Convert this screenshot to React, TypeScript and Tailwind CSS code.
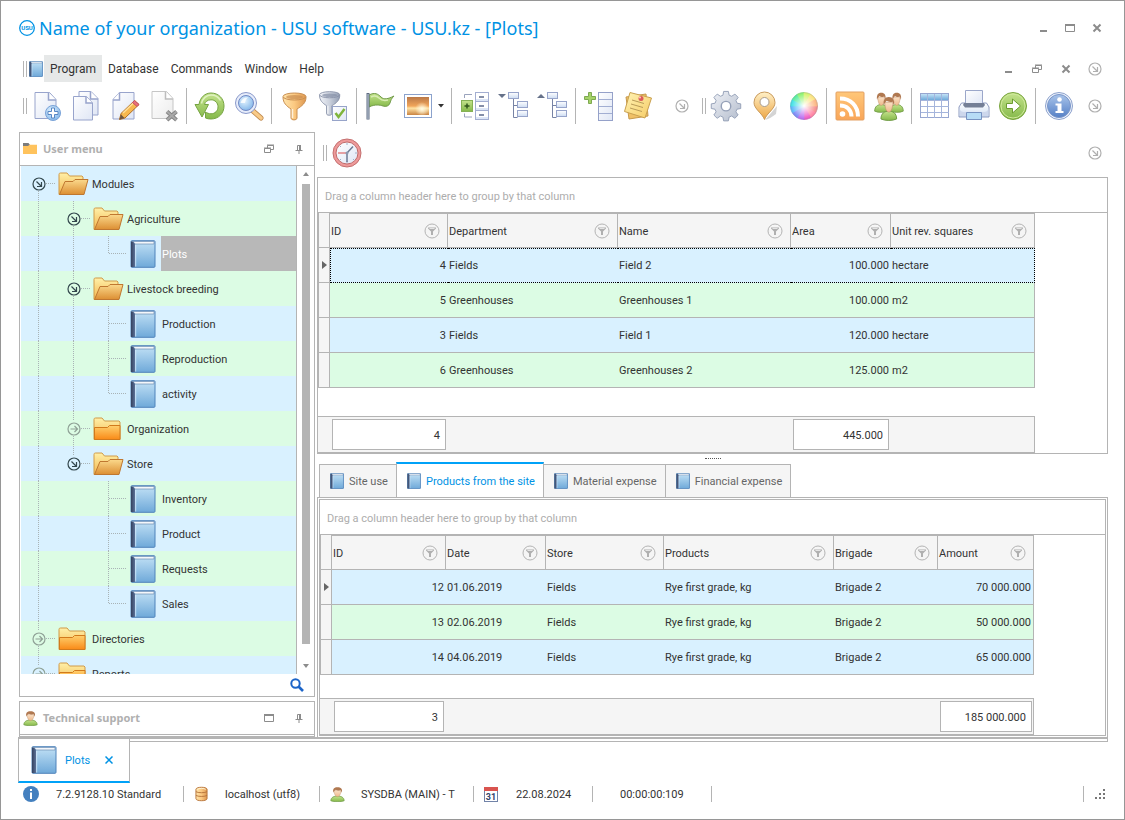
import type { ReactNode } from "react";

/* Shared gradients used by the icons below */
const Gradients = () => (
  <svg className="absolute h-0 w-0" aria-hidden="true">
    <defs>
      <linearGradient id="page" x1="0" y1="0" x2="1" y2="1">
        <stop offset="0" stopColor="#ffffff" />
        <stop offset="1" stopColor="#dfe6f5" />
      </linearGradient>
      <linearGradient id="greyPage" x1="0" y1="0" x2="1" y2="1">
        <stop offset="0" stopColor="#ffffff" />
        <stop offset="1" stopColor="#ececec" />
      </linearGradient>
      <linearGradient id="book" x1="0" y1="0" x2="0" y2="1">
        <stop offset="0" stopColor="#c3e2f6" />
        <stop offset="1" stopColor="#6fa9d9" />
      </linearGradient>
      <linearGradient id="spine" x1="0" y1="0" x2="1" y2="0">
        <stop offset="0" stopColor="#33415f" />
        <stop offset="1" stopColor="#5c7197" />
      </linearGradient>
      <linearGradient id="folderBack" x1="0" y1="0" x2="0" y2="1">
        <stop offset="0" stopColor="#fff0a8" />
        <stop offset="1" stopColor="#f3b64e" />
      </linearGradient>
      <linearGradient id="folderOpen" x1="0" y1="0" x2="0" y2="1">
        <stop offset="0" stopColor="#fbd98c" />
        <stop offset="1" stopColor="#dc8f33" />
      </linearGradient>
      <linearGradient id="folderShut" x1="0" y1="0" x2="0" y2="1">
        <stop offset="0" stopColor="#ffd06e" />
        <stop offset="1" stopColor="#f98a17" />
      </linearGradient>
      <linearGradient id="green" x1="0" y1="0" x2="0" y2="1">
        <stop offset="0" stopColor="#c4e38c" />
        <stop offset="1" stopColor="#85b94a" />
      </linearGradient>
      <linearGradient id="gold" x1="0" y1="0" x2="1" y2="0">
        <stop offset="0" stopColor="#ffe4ab" />
        <stop offset="0.5" stopColor="#fbc880" />
        <stop offset="1" stopColor="#dd9750" />
      </linearGradient>
      <linearGradient id="steel" x1="0" y1="0" x2="1" y2="0">
        <stop offset="0" stopColor="#f1f3f8" />
        <stop offset="0.5" stopColor="#cbd1dd" />
        <stop offset="1" stopColor="#929db2" />
      </linearGradient>
      <linearGradient id="gear" x1="0" y1="0" x2="1" y2="1">
        <stop offset="0" stopColor="#f0f2f7" />
        <stop offset="1" stopColor="#b3bccc" />
      </linearGradient>
      <linearGradient id="sunset" x1="0" y1="0" x2="0" y2="1">
        <stop offset="0" stopColor="#b97848" />
        <stop offset="0.5" stopColor="#f1a55a" />
        <stop offset="0.62" stopColor="#ffe2a4" />
        <stop offset="1" stopColor="#c98443" />
      </linearGradient>
      <linearGradient id="cell" x1="0" y1="0" x2="0" y2="1">
        <stop offset="0" stopColor="#ffffff" />
        <stop offset="1" stopColor="#cddcf2" />
      </linearGradient>
      <linearGradient id="pin" x1="0" y1="0" x2="0" y2="1">
        <stop offset="0" stopColor="#fff1c8" />
        <stop offset="1" stopColor="#eda543" />
      </linearGradient>
      <linearGradient id="rss" x1="0" y1="0" x2="0" y2="1">
        <stop offset="0" stopColor="#ffc779" />
        <stop offset="1" stopColor="#f9a558" />
      </linearGradient>
      <linearGradient id="note" x1="0" y1="0" x2="1" y2="1">
        <stop offset="0" stopColor="#fff3b4" />
        <stop offset="1" stopColor="#f6cc66" />
      </linearGradient>
      <linearGradient id="info" x1="0" y1="0" x2="0" y2="1">
        <stop offset="0" stopColor="#a9c4ea" />
        <stop offset="1" stopColor="#5580c6" />
      </linearGradient>
      <linearGradient id="face" x1="0" y1="0" x2="0" y2="1">
        <stop offset="0" stopColor="#fbe0c4" />
        <stop offset="1" stopColor="#eeb98c" />
      </linearGradient>
      <radialGradient id="lens" cx="0.4" cy="0.35" r="0.7">
        <stop offset="0" stopColor="#e4f4ff" />
        <stop offset="1" stopColor="#7fb4e9" />
      </radialGradient>
      <radialGradient id="flare">
        <stop offset="0" stopColor="#fffbe4" />
        <stop offset="1" stopColor="#fffbe4" stopOpacity="0" />
      </radialGradient>
      <radialGradient id="wheelGlow">
        <stop offset="0" stopColor="#ffffff" />
        <stop offset="1" stopColor="#ffffff" stopOpacity="0" />
      </radialGradient>
    </defs>
  </svg>
);

const Icon = ({ children }: { children: ReactNode }) => (
  <svg viewBox="0 0 32 32" className="h-8 w-8 shrink-0" fill="none" aria-hidden="true">
    {children}
  </svg>
);

const NewIcon = () => (
  <Icon>
    <path d="M4 2.500h14.500l6.500 7V28.500H4z" fill="url(#page)" stroke="#98a4cc" />
    <path d="M17.500 2.500v7.500H25" fill="#fff" stroke="#98a4cc" strokeWidth="1.500" />
    <circle cx="22" cy="23" r="7.500" fill="url(#lens)" stroke="#7aa3d8" />
    <path d="M20.500 18h3v3.500H27v3h-3.500V28h-3v-3.500H17v-3h3.500z" fill="#fff" stroke="#5786c4" />
  </Icon>
);

const CopyIcon = () => (
  <Icon>
    <path d="M9 1.500h12l7 7V25H9z" fill="url(#page)" stroke="#98a4cc" />
    <path d="M20.500 1.500V9H28" fill="#fff" stroke="#98a4cc" strokeWidth="1.500" />
    <path d="M3.500 6.500h13l6 6.500v17h-19z" fill="url(#page)" stroke="#98a4cc" />
    <path d="M16 6.500V13h6.500" fill="#fff" stroke="#98a4cc" strokeWidth="1.500" />
  </Icon>
);

const EditIcon = () => (
  <Icon>
    <path d="M10.500 2.500H25v26.500H4V9.500z" fill="url(#page)" stroke="#98a4cc" />
    <path d="M10.500 2.500V10H4" fill="#fff" stroke="#98a4cc" strokeWidth="1.500" />
    <path d="M10.500 29.500l1.500-6L25.500 10.500l4.500 4L16 28z" fill="#f7b84f" stroke="#b06f27" />
    <path d="M14 23l13-12.500" stroke="#ffe09a" strokeWidth="1.500" />
    <path d="M25.500 10.500l4.500 4-2 2-4.500-4z" fill="#e9707c" stroke="#c25462" />
    <path d="M10.500 29.500l1.500-5 3.500 3.500z" fill="#6b5544" />
  </Icon>
);

const DeleteIcon = () => (
  <Icon>
    <path d="M4 1.500h14.500l6.500 7V28.500H4z" fill="url(#greyPage)" stroke="#c6c6c6" />
    <path d="M17.500 1.500V9H25" fill="#fff" stroke="#bdbdbd" strokeWidth="1.500" />
    <path d="M19 21.500l9.500 8.500M28.500 21.500L19 30" stroke="#858585" strokeWidth="4" />
    <path d="M19 21.500l9.500 8.500M28.500 21.500L19 30" stroke="#a9a9a9" strokeWidth="2" />
  </Icon>
);

const RefreshIcon = () => (
  <Icon>
    <path
      d="M5 14.500C6 7.500 11 3 17 3c7.500 0 13 5.500 13 13s-5.500 13-13 13c-2 0-4-.3-5.500-1v-6c1.500 1 3.500 1.800 5.500 1.800 4 0 7-3 7-7s-3-7-7-7c-3.500 0-6 2-6.500 4.700h4L8 27 1 14.500z"
      fill="url(#green)"
      stroke="#76a442"
    />
    <path d="M7.500 13.500c1-5 5-8.500 9.500-8.500 4 0 7.500 2 9.500 5.500" stroke="#e0f2c0" strokeWidth="1.500" />
  </Icon>
);

const SearchIcon = () => (
  <Icon>
    <path d="M20 21l8 7" stroke="#c08b50" strokeWidth="5" strokeLinecap="round" />
    <path d="M20 21l8 7" stroke="#f9cb88" strokeWidth="3.500" strokeLinecap="round" />
    <circle cx="13" cy="13" r="10.500" fill="#e6ecfa" stroke="#8b9acb" />
    <circle cx="13" cy="13" r="7.500" fill="url(#lens)" stroke="#7289c4" />
    <path d="M7.500 13c1-4 4-6 8-5.500-2 1-3 2.500-3.500 5.500z" fill="#fff" opacity=".8" />
  </Icon>
);

const Funnel = ({ metal, edge }: { metal: string; edge: string }) => (
  <>
    <path d="M4 7c0 6 3.500 9 8 12v9c0 2.500 6 2.500 6 0v-9c5-3 9-6 9-12z" fill={metal} stroke={edge} />
    <ellipse cx="15.500" cy="6.500" rx="11.500" ry="3.500" fill={metal} stroke={edge} />
    <ellipse cx="15.500" cy="7" rx="8.500" ry="2" fill={edge} opacity=".7" />
    <path d="M13.500 19v9" stroke="#fff" strokeWidth="1.500" opacity=".7" />
  </>
);

const FilterIcon = () => (
  <Icon>
    <Funnel metal="url(#gold)" edge="#c98f52" />
  </Icon>
);

const FilterCheckIcon = () => (
  <Icon>
    <g transform="translate(-2 -1) scale(.88)">
      <Funnel metal="url(#steel)" edge="#8690a6" />
    </g>
    <rect x="14.500" y="16.500" width="14" height="14" fill="url(#page)" stroke="#97a4c9" />
    <path d="M17.500 23l3 4 6-8" stroke="#7fb53c" strokeWidth="2.500" />
  </Icon>
);

const FlagIcon = () => (
  <Icon>
    <path d="M5 5c6-3 9-1 12 2s7 2 13-1c-3 3-3 4-4 7-1 3-4 4-7 3s-8-2-14 1z" fill="url(#green)" stroke="#729b4a" />
    <path d="M7 7c4-2 6-1 8 1s5 3 9 2" stroke="#d8edb2" strokeWidth="1.500" />
    <path d="M4 3v26.500" stroke="#5d6a80" strokeWidth="3" />
    <path d="M4 4v25" stroke="#c9d3e2" />
  </Icon>
);

const PictureIcon = () => (
  <Icon>
    <rect x="1.500" y="4.500" width="27" height="23" fill="#fff" stroke="#8ba2cc" />
    <rect x="4" y="7" width="22" height="18" fill="url(#sunset)" />
    <circle cx="19" cy="19" r="7" fill="url(#flare)" />
  </Icon>
);

const ExpandListIcon = () => (
  <Icon>
    <path d="M13 4.500H5.500V8M5.500 23.500v3.500H13" stroke="#9aa3bd" />
    <rect x="16.500" y="2.500" width="13" height="27" fill="#fff" stroke="#a3aed1" />
    <path d="M17 11.500h12M17 20.500h12" stroke="#a3aed1" />
    <path d="M17 10h12M17 19h12M17 28h12" stroke="#dde6f6" strokeWidth="2" />
    <path d="M20 7h5M20 16h5M20 25h5" stroke="#5d6b8c" strokeWidth="1.500" />
    <rect x="2.500" y="10.500" width="11" height="11" fill="url(#green)" stroke="#86b155" />
    <path d="M8 13.500v5M5.500 16h5" stroke="#31571b" strokeWidth="1.500" />
  </Icon>
);

const TreeIcon = ({ up }: { up?: boolean }) => (
  <Icon>
    {up ? <path d="M0 8l4-4 4 4z" fill="#66728a" /> : <path d="M0 4h8L4 8z" fill="#66728a" />}
    <path d="M15.500 9v18.500h4M15.500 15.500h4" stroke="#7783a5" />
    <rect x="10.500" y="2.500" width="10" height="6" fill="url(#cell)" stroke="#97a4ca" />
    <rect x="19.500" y="11.500" width="10" height="6" fill="url(#cell)" stroke="#97a4ca" />
    <rect x="19.500" y="20.500" width="10" height="6" fill="url(#cell)" stroke="#97a4ca" />
  </Icon>
);

const AddListIcon = () => (
  <Icon>
    <path d="M5.500 2.500h3v4h4v3h-4v4h-3v-4h-4v-3h4z" fill="#a5d367" stroke="#7ea852" />
    <rect x="15.500" y="2.500" width="14" height="28" fill="url(#page)" stroke="#95a1c9" />
    <path d="M16 9.500h13M16 16.500h13M16 23.500h13" stroke="#a2aed2" />
  </Icon>
);

const NoteIcon = () => (
  <Icon>
    <path d="M4 7l20-3 2 22-19 3z" fill="#f0c066" stroke="#c79a4e" />
    <path d="M8 2.500L29.500 8 23 28 2.500 21.500z" fill="url(#note)" stroke="#c9a050" />
    <path d="M10 10l12 3.500M9 14l12 3.500M8 18l12 3.500" stroke="#b99b58" />
    <circle cx="19" cy="8.500" r="2.500" fill="#dc5a5a" />
    <circle cx="18" cy="7.500" r="1" fill="#ffc9c2" />
  </Icon>
);

const GearIcon = () => (
  <Icon>
    <g transform="translate(.8 0) scale(.95)">
      <path
        d="M13.500 1.500h5l.8 4 2.700 1.100 3.400-2.300 3.400 3.500-2.300 3.300 1.200 2.800 3.800.7v4.900l-4 .7-1.100 2.800 2.400 3.300-3.500 3.500-3.300-2.400-2.700 1.100-.8 4h-5l-.7-4-2.700-1.100L6.700 29.800 3.200 26.300l2.400-3.300-1.200-2.800-3.900-.7v-4.900l4-.7 1.100-2.800-2.300-3.300 3.500-3.500 3.300 2.300 2.700-1.100z"
        fill="url(#gear)"
        stroke="#95a0b7"
        strokeLinejoin="round"
      />
      <circle cx="16" cy="17" r="5" fill="#fff" stroke="#95a0b7" strokeWidth="1.500" />
    </g>
  </Icon>
);

const PinIcon = () => (
  <Icon>
    <path d="M16 30L28 16l-1 8c-4 3-7 5-11 6z" fill="#aaa" opacity=".5" />
    <path d="M15.500 29.500C13 23 5 19 5 12.500a10.500 10.500 0 0121 0C26 19 18 23 15.500 29.500z" fill="url(#pin)" stroke="#c99a5c" />
    <circle cx="15.500" cy="12" r="4.500" fill="#fff" stroke="#a99c8c" />
  </Icon>
);

const wheelColors = ["#f58a8a", "#ff7f9f", "#ee55c0", "#b86bf0", "#7a86f5", "#58b6fa", "#3ee0e4", "#55ec9c", "#8af26c", "#d5f26a", "#fbe27a", "#fcb47e"];

const ColorIcon = () => (
  <Icon>
    {wheelColors.map((color, i) => (
      <path key={color} d="M16 16L29.500 16A13.500 13.500 0 0127.700 22.750z" fill={color} stroke={color} strokeWidth=".7" transform={`rotate(${i * 30} 16 16)`} />
    ))}
    <circle cx="16" cy="16" r="13" fill="url(#wheelGlow)" />
    <circle cx="16" cy="16" r="13.500" stroke="#8c9aa8" opacity=".35" />
  </Icon>
);

const RssIcon = () => (
  <Icon>
    <rect x="2" y="2" width="28" height="28" rx="1" fill="url(#rss)" stroke="#e3a062" />
    <path d="M6 8.500c11 0 18 7.500 18 18M6 15.500c7 0 11.500 4.500 11.500 11" stroke="#fff" strokeWidth="4" />
    <circle cx="8.500" cy="24" r="2.800" fill="#fff" />
  </Icon>
);

const Person = () => (
  <>
    <path d="M2 27c0-6 4-8 8-8s8 2 8 8c-4 2-12 2-16 0z" fill="url(#green)" stroke="#6f9a46" />
    <path d="M6 10c0 7 2 10 4 10s4-3 4-10z" fill="url(#face)" stroke="#c3906a" strokeWidth=".6" />
    <path d="M5 13.500c-1-6 1-9 5-9s6.500 3 5 9l-1-4c-3 .5-5 0-6-1-1 1-2.500 2-3 5z" fill="#b07850" />
  </>
);

const PeopleIcon = () => (
  <Icon>
    <g transform="translate(0 -1) scale(.82)"><Person /></g>
    <g transform="translate(15.500 -1) scale(.82)"><Person /></g>
    <g transform="translate(6 2.500) scale(.98)"><Person /></g>
  </Icon>
);

const UserIcon = ({ className }: { className: string }) => (
  <svg viewBox="1 4 18 25" className={className} preserveAspectRatio="none" aria-hidden="true">
    <Person />
  </svg>
);

const TableIcon = () => (
  <Icon>
    <rect x="1.500" y="3.500" width="28" height="24" fill="#fff" stroke="#97a6d0" />
    <rect x="2" y="4" width="27" height="6" fill="url(#book)" />
    <path d="M2 10.500h28M2 16.500h28M2 22.500h28M8.500 4v24M15.500 4v24M22.500 4v24" stroke="#a5b5dc" />
  </Icon>
);

const PrinterIcon = () => (
  <Icon>
    <path d="M3.500 13h25l2.500 4v10H1V17z" fill="url(#cell)" stroke="#8d9abf" />
    <path d="M1.500 17c0 4 2 5 5 5h19c3 0 5-1 5-5v9h-29z" fill="#cdd7ec" />
    <path d="M7.500 .5h17V14h-17z" fill="url(#page)" stroke="#9ba7ca" />
    <path d="M6 13h20l1 2-2 2.500H7L5 15z" fill="#747f96" />
    <path d="M8.500 22.500h15v7h-15z" fill="#b7dcf6" stroke="#7893c2" />
  </Icon>
);

const GoIcon = () => (
  <Icon>
    <circle cx="16" cy="16" r="13.500" fill="url(#green)" stroke="#79a43e" />
    <circle cx="16" cy="16" r="12" stroke="#cfe99b" />
    <path d="M9.500 13.500h6V9l8 7-8 7v-4.500h-6z" fill="#fff" stroke="#6c9c31" />
  </Icon>
);

const InfoIcon = () => (
  <Icon>
    <circle cx="16" cy="16" r="13.500" fill="#eef3fc" stroke="#8ca1cc" />
    <circle cx="16" cy="16" r="11.500" fill="url(#info)" stroke="#7995c8" />
    <circle cx="16.500" cy="9.500" r="2.300" fill="#fff" />
    <path d="M12.500 13.500h6V21h2v2h-8v-2h2v-5.500h-2z" fill="#fff" />
  </Icon>
);

const ClockIcon = () => (
  <Icon>
    <circle cx="16" cy="16" r="14" fill="#ee9a9a" stroke="#c47070" />
    <circle cx="16" cy="16" r="11" fill="url(#page)" stroke="#c06a6a" />
    <path d="M16 6v2M16 24v2M26 16h-2M9 9l1 1M23 23l-1-1M9 23l1-1" stroke="#a2b0c8" />
    <path d="M7 16h9" stroke="#d84c4c" />
    <path d="M22 9.500L16 16v9" stroke="#6d7b95" strokeWidth="1.500" />
    <circle cx="16" cy="16" r="1.500" fill="#8b98b0" />
  </Icon>
);

const BookIcon = ({ small }: { small?: boolean }) => (
  <svg viewBox="0 0 26 28" className={small ? "h-4 w-[14px] shrink-0" : "h-7 w-[26px] shrink-0"} preserveAspectRatio="none" aria-hidden="true">
    <rect x="1" y=".7" width="24" height="26.600" rx="1" fill="url(#book)" stroke="#4f83bb" strokeWidth={small ? 1.500 : 1} />
    <path d="M3 1.500h21v2.500H5z" fill="#f4f7fb" stroke="#6b8db3" strokeWidth=".7" />
    <path d="M1 1.500h2l2 2.500v23H1z" fill="url(#spine)" />
    <path d="M5.700 5v21.500" stroke="#d8ecfa" strokeWidth=".8" />
  </svg>
);

const OpenFolder = () => (
  <svg viewBox="0 0 31 24" className="h-6 w-[31px]" aria-hidden="true">
    <path d="M1 22.500V2.500C1 1.500 1.500 1 2.500 1H9l2.500 3H24l1 1v17.500z" fill="url(#folderBack)" stroke="#d09a48" />
    <path d="M1.500 22.500L7 9.500h8l2-2h13l-4 15z" fill="url(#folderOpen)" stroke="#bf7730" />
  </svg>
);

const ShutFolder = () => (
  <svg viewBox="0 0 31 24" className="h-6 w-[31px]" aria-hidden="true">
    <path d="M1 22.500V2.500C1 1.500 1.500 1 2.500 1H9l2.500 3H26l1 1v17.500z" fill="url(#folderBack)" stroke="#d09a48" />
    <path d="M1.500 22.500V10.500h13l2-2H27v14z" fill="url(#folderShut)" stroke="#d17a1c" />
  </svg>
);

const MoreIcon = ({ color = "#b0b0b0" }: { color?: string }) => (
  <svg viewBox="0 0 14 14" className="h-[14px] w-[14px] shrink-0" fill="none" stroke={color} strokeWidth="1.200" aria-hidden="true">
    <circle cx="7" cy="7" r="6" />
    <path d="M4.500 4.500l4.500 4.500M9.500 5v4.500H5" />
  </svg>
);

const ForwardIcon = () => (
  <svg viewBox="0 0 14 14" className="h-[14px] w-[14px] shrink-0" fill="none" stroke="#8fa196" strokeWidth="1.200" aria-hidden="true">
    <circle cx="7" cy="7" r="6" />
    <path d="M3.500 7h7M7.500 4l3 3-3 3" />
  </svg>
);

const MinimizeGlyph = () => (
  <svg viewBox="0 0 10 10" className="h-[10px] w-[10px]" aria-hidden="true"><path d="M2 7h7v2H2z" fill="#8c8c8c" /></svg>
);
const MaximizeGlyph = () => (
  <svg viewBox="0 0 10 10" className="h-[10px] w-[10px]" fill="none" stroke="#8c8c8c" aria-hidden="true">
    <path d="M.5 2v6.500h9V2" />
    <path d="M0 2h10" strokeWidth="2" />
  </svg>
);
const RestoreGlyph = () => (
  <svg viewBox="0 0 10 10" className="h-[10px] w-[10px]" fill="none" stroke="#8c8c8c" aria-hidden="true">
    <path d="M3.500 4V1.500h6v4H7M3 1h7M.5 4.500h6v4h-6zM0 4h7" />
  </svg>
);
const CloseGlyph = () => (
  <svg viewBox="0 0 10 10" className="h-[10px] w-[10px]" stroke="#8c8c8c" strokeWidth="2" aria-hidden="true"><path d="M1.500 1.500l7 7M8.500 1.500l-7 7" /></svg>
);
const TackGlyph = () => (
  <svg viewBox="0 0 10 10" className="h-[10px] w-[10px]" fill="none" stroke="#8c8c8c" aria-hidden="true">
    <path d="M3.500 6V1.500h3V6M1.500 6.500h7M5 7v3" />
    <path d="M6 1v5" strokeWidth="2" />
  </svg>
);

const GlyphButton = ({ label, children, className = "" }: { label: string; children: ReactNode; className?: string }) => (
  <button aria-label={label} className={`flex h-5 w-[14px] shrink-0 items-center justify-center ${className}`}>
    {children}
  </button>
);

const Handle = () => <span className="h-4 w-1 shrink-0 border-x border-[#b4b4b4]" />;
const Separator = () => <span className="mx-[3px] h-9 w-px shrink-0 bg-[#b4b4b4]" />;

const Tool = ({ label, children }: { label: string; children: ReactNode }) => (
  <button aria-label={label} className="flex h-9 w-[39px] shrink-0 items-center justify-center">
    {children}
  </button>
);

const TitleBar = () => (
  <header className="flex h-[54px] shrink-0 items-center pr-5 pl-[18px]">
    <svg viewBox="0 0 16 16" className="mr-1 h-4 w-4 shrink-0" aria-hidden="true">
      <circle cx="8" cy="8" r="7.300" fill="none" stroke="#0092e4" strokeWidth="1.300" />
      <text x="8" y="10.300" textAnchor="middle" fontSize="6" fontWeight="700" fill="#0092e4">USU</text>
    </svg>
    <h1 className="flex-1 truncate font-['Noto_Sans',sans-serif] text-lg text-[#0092e4]">
      Name of your organization - USU software - USU.kz - [Plots]
    </h1>
    <div className="flex gap-[13px]">
      <GlyphButton label="Minimize window"><MinimizeGlyph /></GlyphButton>
      <GlyphButton label="Maximize window"><MaximizeGlyph /></GlyphButton>
      <GlyphButton label="Close window"><CloseGlyph /></GlyphButton>
    </div>
  </header>
);

const menus = ["Program", "Database", "Commands", "Window", "Help"];

const MenuBar = () => (
  <nav className="flex h-[27px] shrink-0 items-center pr-[22px] pl-[22px]">
    <Handle />
    <span className="mr-px ml-0.5"><BookIcon small /></span>
    {menus.map((menu, i) => (
      <button key={menu} className={`h-full px-1.5 text-xs text-[#333] ${i === 0 ? "bg-[#e6e8e8]" : ""}`}>
        {menu}
      </button>
    ))}
    <div className="ml-auto flex items-center gap-[15px]">
      <GlyphButton label="Minimize"><MinimizeGlyph /></GlyphButton>
      <GlyphButton label="Restore"><RestoreGlyph /></GlyphButton>
      <GlyphButton label="Close"><CloseGlyph /></GlyphButton>
      <GlyphButton label="More menu options"><MoreIcon /></GlyphButton>
    </div>
  </nav>
);

const Toolbar = () => (
  <div role="toolbar" aria-label="Main" className="flex h-12 shrink-0 items-center pr-[22px] pl-[22px]">
    <Handle />
    <Tool label="Add"><NewIcon /></Tool>
    <Tool label="Copy"><CopyIcon /></Tool>
    <Tool label="Edit"><EditIcon /></Tool>
    <Tool label="Delete"><DeleteIcon /></Tool>
    <Separator />
    <Tool label="Refresh"><RefreshIcon /></Tool>
    <Tool label="Search"><SearchIcon /></Tool>
    <Separator />
    <Tool label="Filter"><FilterIcon /></Tool>
    <Tool label="Apply filter"><FilterCheckIcon /></Tool>
    <Separator />
    <Tool label="Flag"><FlagIcon /></Tool>
    <Tool label="Image"><PictureIcon /></Tool>
    <button aria-label="Image options" className="flex h-9 w-2.5 items-center">
      <svg viewBox="0 0 6 4" className="h-1 w-1.5" aria-hidden="true"><path d="M0 0h6L3 3.500z" fill="#333" /></svg>
    </button>
    <Separator />
    <Tool label="Expand groups"><ExpandListIcon /></Tool>
    <Tool label="Expand tree"><TreeIcon /></Tool>
    <Tool label="Collapse tree"><TreeIcon up /></Tool>
    <Separator />
    <Tool label="Add row"><AddListIcon /></Tool>
    <Tool label="Notes"><NoteIcon /></Tool>
    <GlyphButton label="More tools" className="mr-[13px] ml-[18px]"><MoreIcon /></GlyphButton>
    <Handle />
    <Tool label="Settings"><GearIcon /></Tool>
    <Tool label="Location"><PinIcon /></Tool>
    <Tool label="Colors"><ColorIcon /></Tool>
    <Separator />
    <Tool label="News"><RssIcon /></Tool>
    <Tool label="Users"><PeopleIcon /></Tool>
    <Separator />
    <Tool label="Table"><TableIcon /></Tool>
    <Tool label="Print"><PrinterIcon /></Tool>
    <Tool label="Go"><GoIcon /></Tool>
    <Separator />
    <Tool label="About"><InfoIcon /></Tool>
    <GlyphButton label="More options" className="ml-auto"><MoreIcon /></GlyphButton>
  </div>
);

type Node = {
  label: string;
  // one character per tree column: "|" runs through, "t" tee, "l" elbow, "." empty,
  // "f" first, "m" middle and "e" end expander
  guides: string;
  icon: "open" | "shut" | "book";
  selected?: boolean;
};

const nodes: Node[] = [
  { label: "Modules", guides: "f", icon: "open" },
  { label: "Agriculture", guides: "|m", icon: "open" },
  { label: "Plots", guides: "||l", icon: "book", selected: true },
  { label: "Livestock breeding", guides: "|m", icon: "open" },
  { label: "Production", guides: "||t", icon: "book" },
  { label: "Reproduction", guides: "||t", icon: "book" },
  { label: "activity", guides: "||l", icon: "book" },
  { label: "Organization", guides: "|m", icon: "shut" },
  { label: "Store", guides: "|e", icon: "open" },
  { label: "Inventory", guides: "|.t", icon: "book" },
  { label: "Product", guides: "|.t", icon: "book" },
  { label: "Requests", guides: "|.t", icon: "book" },
  { label: "Sales", guides: "|.l", icon: "book" },
  { label: "Directories", guides: "m", icon: "shut" },
  { label: "Reports", guides: "e", icon: "shut" },
];

const guidePaths: Record<string, string> = {
  "|": "M17.500 0v35",
  t: "M17.500 0v35M18 17.500H35",
  l: "M17.500 0v17M18 17.500H35",
  ".": "",
  f: "M17.500 25v10M25 17.500h10",
  m: "M17.500 0v10M17.500 25v10M25 17.500h10",
  e: "M17.500 0v10M25 17.500h10",
};

const Guide = ({ kind, icon }: { kind: string; icon: Node["icon"] }) => (
  <span className="grid h-[35px] w-[35px] shrink-0 place-items-center">
    <svg viewBox="0 0 35 35" className="col-start-1 row-start-1 h-[35px] w-[35px]" aria-hidden="true">
      <path d={guidePaths[kind]} fill="none" stroke="#a9b3b6" strokeDasharray="1 1" />
    </svg>
    {"fme".includes(kind) && (
      <button aria-label={icon === "open" ? "Collapse" : "Expand"} className="col-start-1 row-start-1">
        {icon === "open" ? <MoreIcon color="#33474d" /> : <ForwardIcon />}
      </button>
    )}
  </span>
);

const TreeRow = ({ node, index }: { node: Node; index: number }) => (
  <li role="treeitem" aria-selected={!!node.selected} className={`flex h-[35px] items-center ${index % 2 ? "bg-[#dcfce4]" : "bg-[#d9f1ff]"}`}>
    {node.guides.split("").map((kind, i) => (
      <Guide key={i} kind={kind} icon={node.icon} />
    ))}
    <span className="flex w-[35px] shrink-0 justify-center pr-px">
      {node.icon === "book" ? <BookIcon /> : node.icon === "open" ? <OpenFolder /> : <ShutFolder />}
    </span>
    <span className={`flex h-full flex-1 items-center pt-0.5 pl-px ${node.selected ? "bg-[#b8b8b8] text-white" : ""}`}>{node.label}</span>
  </li>
);

const PanelTitle = ({ icon, title, children }: { icon: ReactNode; title: string; children: ReactNode }) => (
  <div className="flex h-8 shrink-0 items-center pr-2 pl-[3px]">
    {icon}
    <h2 className="ml-[5px] flex-1 font-['Noto_Sans',sans-serif] font-bold text-[#b0b0b0]">{title}</h2>
    <div className="flex gap-4">{children}</div>
  </div>
);

const Sidebar = () => (
  <aside className="flex w-[296px] shrink-0 flex-col">
    <section className="flex flex-1 flex-col border border-[#b4b4b4]">
      <PanelTitle
        title="User menu"
        icon={
          <svg viewBox="0 0 15 12" className="h-3 w-[15px]" aria-hidden="true">
            <path d="M0 0h5.500l1.500 2h7v2H0z" fill="#7b7b7b" />
            <path d="M0 3h5l1.500-1.300H14V11H0z" fill="#ffc35d" />
          </svg>
        }
      >
        <GlyphButton label="Restore panel"><RestoreGlyph /></GlyphButton>
        <GlyphButton label="Pin panel"><TackGlyph /></GlyphButton>
      </PanelTitle>
      <div className="flex min-h-0 flex-1 border-t border-[#b4b4b4] pl-px">
        <ul role="tree" className="h-0 min-h-full flex-1 overflow-hidden border-r border-[#b4b4b4]">
          {nodes.map((node, i) => (
            <TreeRow key={node.label} node={node} index={i} />
          ))}
        </ul>
        <div className="flex w-[17px] flex-col items-center py-1.5">
          <svg viewBox="0 0 6 4" className="h-1 w-1.5" aria-hidden="true"><path d="M0 4h6L3 0z" fill="#8c8c8c" /></svg>
          <span className="mt-2 mb-5 w-2 flex-1 bg-[#b4b4b4]" />
          <svg viewBox="0 0 6 4" className="h-1 w-1.5" aria-hidden="true"><path d="M0 0h6L3 4z" fill="#8c8c8c" /></svg>
        </div>
      </div>
      <div className="flex h-[22px] shrink-0 items-center justify-end pr-2.5">
        <button aria-label="Find in menu">
          <svg viewBox="0 0 14 14" className="h-[14px] w-[14px]" fill="none" stroke="#1c64c8" aria-hidden="true">
            <circle cx="5.500" cy="5.500" r="4.200" strokeWidth="2" />
            <path d="M8.500 8.500l4.500 4.500" strokeWidth="2.600" />
          </svg>
        </button>
      </div>
    </section>
    <section className="mt-1 border border-[#b4b4b4] pb-px">
      <div className="border-b border-[#b4b4b4]">
        <PanelTitle title="Technical support" icon={<UserIcon className="h-[15px] w-[15px]" />}>
          <GlyphButton label="Maximize panel"><MaximizeGlyph /></GlyphButton>
          <GlyphButton label="Pin panel"><TackGlyph /></GlyphButton>
        </PanelTitle>
      </div>
    </section>
  </aside>
);

type Column = { title: string; width: string; right?: boolean; total?: string };

const plotColumns: Column[] = [
  { title: "ID", width: "w-[118px]", right: true, total: "4" },
  { title: "Department", width: "w-[170px]" },
  { title: "Name", width: "w-[173px]" },
  { title: "Area", width: "w-[100px]", right: true, total: "445.000" },
  { title: "Unit rev. squares", width: "w-[144px]" },
];

const plots = [
  ["4", "Fields", "Field 2", "100.000", "hectare"],
  ["5", "Greenhouses", "Greenhouses 1", "100.000", "m2"],
  ["3", "Fields", "Field 1", "120.000", "hectare"],
  ["6", "Greenhouses", "Greenhouses 2", "125.000", "m2"],
];

const productColumns: Column[] = [
  { title: "ID", width: "w-[114px]", right: true, total: "3" },
  { title: "Date", width: "w-[100px]" },
  { title: "Store", width: "w-[118px]" },
  { title: "Products", width: "w-[170px]" },
  { title: "Brigade", width: "w-[104px]" },
  { title: "Amount", width: "w-[96px]", right: true, total: "185 000.000" },
];

const products = [
  ["12", "01.06.2019", "Fields", "Rye first grade, kg", "Brigade 2", "70 000.000"],
  ["13", "02.06.2019", "Fields", "Rye first grade, kg", "Brigade 2", "50 000.000"],
  ["14", "04.06.2019", "Fields", "Rye first grade, kg", "Brigade 2", "65 000.000"],
];

const FilterGlyph = () => (
  <svg viewBox="0 0 16 16" className="h-4 w-4" fill="none" stroke="#b4b4b4" aria-hidden="true">
    <circle cx="8" cy="8" r="7" />
    <path d="M4 4.500h8v1L9 8.500V12H7V8.500l-3-3z" fill="#b0b0b0" stroke="none" />
    <path d="M5.500 5.500h5" stroke="#e4e4e4" />
  </svg>
);

const cellBorder = (focused: boolean, first: boolean, last: boolean) => {
  if (!focused) return `border-b border-[#b4b4b4] pt-0.5 ${last ? "border-r" : ""}`;
  return `border-y border-dotted border-black pt-0 ${first ? "border-l" : ""} ${last ? "border-r" : ""}`;
};

const Grid = ({ columns, rows, focused = false }: { columns: Column[]; rows: string[][]; focused?: boolean }) => (
  <div className="flex flex-1 flex-col border border-[#b4b4b4]">
    <div className="flex h-[35px] shrink-0 items-center border-b border-[#b4b4b4] px-[7px] pt-[3px] text-[#adadad]">
      Drag a column header here to group by that column
    </div>
    <table className="w-max table-fixed border-separate border-spacing-0">
      <thead>
        <tr className="h-[35px] bg-[#f5f5f5]">
          <td className="w-3 border-r border-b border-l border-[#b4b4b4] p-0" />
          {columns.map((column) => (
            <th key={column.title} scope="col" className={`${column.width} border-t border-r border-b border-[#b4b4b4] p-0 text-left font-normal`}>
              <div className="flex items-center justify-between pr-[7px] pl-px">
                <span className="pt-0.5">{column.title}</span>
                <button aria-label={`Filter by ${column.title}`}><FilterGlyph /></button>
              </div>
            </th>
          ))}
        </tr>
      </thead>
      <tbody>
        {rows.map((row, r) => (
          <tr key={row[0]} className={`h-[35px] ${r % 2 ? "bg-[#dcfce4]" : "bg-[#d9f1ff]"}`}>
            <td className="border-r border-b border-l border-[#b4b4b4] bg-[#f5f5f5] p-0">
              {r === 0 && (
                <svg viewBox="0 0 5 8" className="mx-auto h-2 w-[5px]" aria-hidden="true"><path d="M0 0l5 4-5 4z" fill="#666" /></svg>
              )}
            </td>
            {row.map((value, c) => (
              <td
                key={columns[c].title}
                className={`${cellBorder(focused && r === 0, c === 0, c === row.length - 1)} pr-0.5 pb-0 pl-px ${columns[c].right ? "text-right" : ""}`}
              >
                {value}
              </td>
            ))}
          </tr>
        ))}
      </tbody>
    </table>
    <div className="min-h-[23px] flex-1" />
    <div className="flex h-[37px] w-max shrink-0 items-start border border-l-0 border-[#b4b4b4] bg-[#f5f5f5] pt-0.5 pl-3">
      {columns.map((column, i) => (
        <div key={column.title} className={`${column.width} ${i === columns.length - 1 ? "-mr-px" : ""} px-0.5`}>
          {column.total && (
            <div className="flex h-[31px] items-center justify-end border border-[#b4b4b4] bg-white pt-0.5 pr-[5px]">{column.total}</div>
          )}
        </div>
      ))}
    </div>
  </div>
);

const tabs = ["Site use", "Products from the site", "Material expense", "Financial expense"];

const Workspace = () => (
  <main className="flex min-w-0 flex-1 flex-col">
    <div className="flex h-[45px] shrink-0 items-center pr-1.5 pb-1 pl-1.5">
      <Handle />
      <Tool label="Schedule"><ClockIcon /></Tool>
      <GlyphButton label="More actions" className="ml-auto"><MoreIcon /></GlyphButton>
    </div>
    <div className="flex min-h-[277px] flex-1 flex-col">
      <Grid columns={plotColumns} rows={plots} focused />
    </div>
    <div className="flex h-2 shrink-0 items-center justify-center">
      <span className="w-4 border-t border-dotted border-[#555]" />
    </div>
    <div role="tablist" className="-mb-px flex h-9 shrink-0 items-end pl-0.5">
      {tabs.map((tab, i) => (
        <button
          key={tab}
          role="tab"
          aria-selected={i === 1}
          className={
            i === 1
              ? "flex h-9 items-center gap-[5px] border-x border-t-2 border-x-[#b4b4b4] border-t-[#00a2f8] bg-white pr-2 pl-2.5 text-[#0092e4]"
              : `flex h-[34px] items-center gap-[5px] border-y border-[#b4b4b4] bg-[#f5f5f5] pr-2 pl-2.5 text-[#666] ${i === 0 ? "border-l" : "border-r"}`
          }
        >
          <BookIcon small />
          <span className="pt-0.5">{tab}</span>
        </button>
      ))}
    </div>
    <div className="flex shrink-0 flex-col border border-b-0 border-[#b4b4b4] px-px py-px">
      <Grid columns={productColumns} rows={products} />
    </div>
  </main>
);

const DocumentTabs = () => (
  <div className="mr-4 ml-[17px] flex shrink-0 items-start border-t-2 border-[#b4b4b4]">
    <div className="flex h-11 items-center border-x border-b-2 border-x-[#b4b4b4] border-b-[#00a2f8] pr-4 pl-3">
      <BookIcon />
      <a href="#plots" className="mr-[15px] ml-2 pt-0.5 text-[#0092e4]">Plots</a>
      <button aria-label="Close Plots">
        <svg viewBox="0 0 8 8" className="h-2 w-2" stroke="#0092e4" strokeWidth="1.500" aria-hidden="true"><path d="M.5.5l7 7M7.500.5l-7 7" /></svg>
      </button>
    </div>
    <div className="h-[3px] flex-1 border-r border-b border-[#b4b4b4]" />
  </div>
);

const StatusDivider = () => <span className="h-4 w-px shrink-0 bg-[#b4b4b4]" />;

const StatusBar = () => (
  <footer className="flex h-[22px] shrink-0 items-center pr-[18px] pl-[22px]">
    <svg viewBox="0 0 16 16" className="h-4 w-4" aria-hidden="true">
      <circle cx="8" cy="8" r="8" fill="#4480bf" />
      <path d="M7 3h2v2H7zM7 6.500h2V13H7z" fill="#fff" />
    </svg>
    <span className="w-[144px] pt-0.5 pl-[17px]">7.2.9128.10 Standard</span>
    <StatusDivider />
    <svg viewBox="0 0 14 16" className="ml-[11px] h-4 w-[13px]" aria-hidden="true">
      <path d="M1 3c0-3 12-3 12 0v10c0 3-12 3-12 0z" fill="url(#gold)" stroke="#b5733a" />
      <path d="M1 5.500c2 1.500 10 1.500 12 0M1 9.500c2 1.500 10 1.500 12 0" stroke="#b5733a" fill="none" />
      <path d="M2.500 3c2-1.500 7-1.500 9 0" stroke="#fff6da" fill="none" />
    </svg>
    <span className="w-[111px] pt-0.5 pl-[17px]">localhost (utf8)</span>
    <StatusDivider />
    <UserIcon className="ml-[10px] h-[15px] w-[15px]" />
    <span className="w-[128px] pt-0.5 pl-4">SYSDBA (MAIN) - T</span>
    <StatusDivider />
    <svg viewBox="0 0 14 15" className="ml-[10px] h-[15px] w-[14px]" aria-hidden="true">
      <rect x=".5" y=".5" width="13" height="14" fill="#fff" stroke="#7183a8" />
      <rect width="14" height="4" fill="#d9544f" />
      <text x="7" y="12.500" textAnchor="middle" fontSize="9" fontWeight="700" fill="#33456b">31</text>
    </svg>
    <span className="w-[94px] pt-0.5 pl-[18px]">22.08.2024</span>
    <StatusDivider />
    <span className="w-[118px] pt-0.5 pl-[27px]">00:00:00:109</span>
    <StatusDivider />
    <span className="ml-auto" />
    <StatusDivider />
    <svg viewBox="0 0 12 12" className="ml-2.5 h-3 w-3" fill="#777" aria-hidden="true">
      <path d="M9 1h2v2H9zM9 5h2v2H9zM5 5h2v2H5zM9 9h2v2H9zM5 9h2v2H5zM1 9h2v2H1z" />
    </svg>
  </footer>
);

export default function App() {
  return (
    <div className="flex min-h-screen w-full flex-col border border-[#969696] bg-white pb-3.5 font-[Roboto,sans-serif] text-[11px] leading-4 text-[#333]">
      <Gradients />
      <TitleBar />
      <MenuBar />
      <Toolbar />
      <div className="flex flex-1 gap-0.5 pt-0.5 pr-4 pl-[18px]">
        <Sidebar />
        <Workspace />
      </div>
      <DocumentTabs />
      <StatusBar />
    </div>
  );
}
